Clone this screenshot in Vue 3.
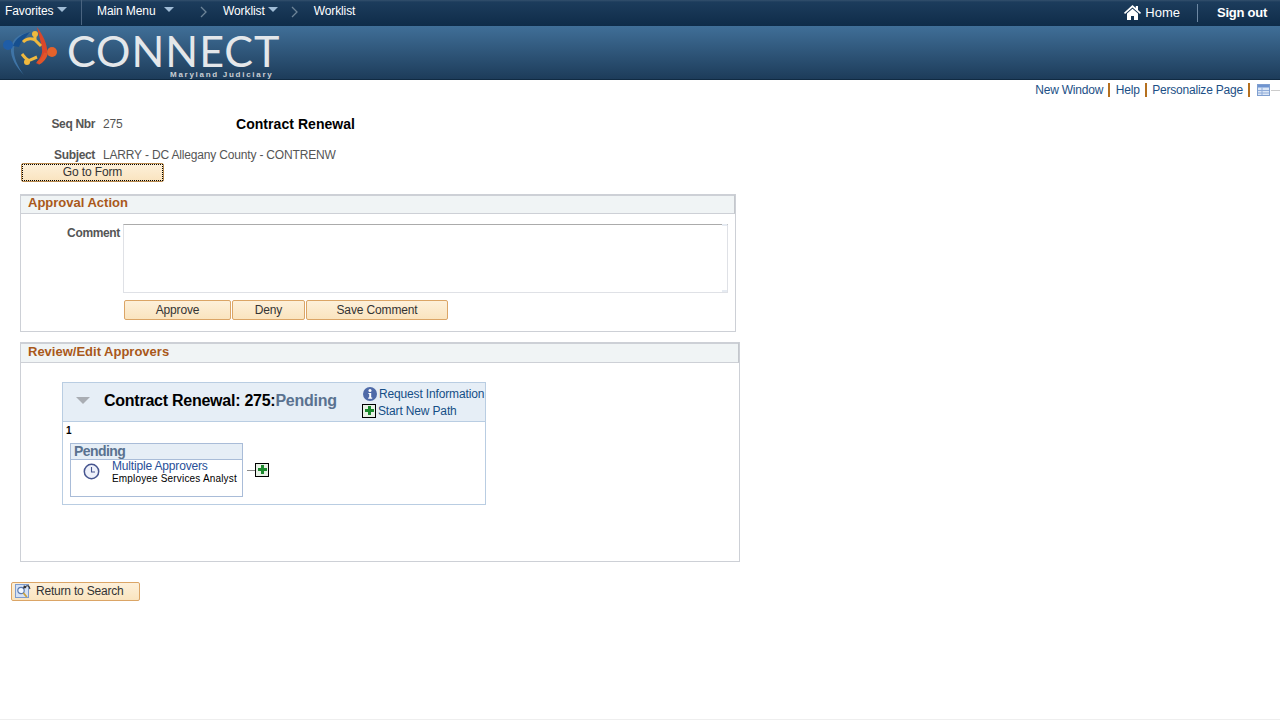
<script setup>
const links = ['New Window', 'Help', 'Personalize Page']
const actions = [
  { label: 'Approve', cls: 'approve' },
  { label: 'Deny', cls: 'deny' },
  { label: 'Save Comment', cls: 'save' }
]
</script>

<template>
  <div class="page">
    <nav class="nav">
      <div class="nav-left">
        <span class="fav">Favorites<i class="caret"></i></span>
        <span class="main">Main Menu<i class="caret wide"></i></span>
        <svg class="chev first" width="8" height="12" viewBox="0 0 8 12"><path d="M1 1l5 5-5 5" fill="none" stroke="#6d8498" stroke-width="1.3"/></svg>
        <span class="crumb">Worklist<i class="caret near"></i></span>
        <svg class="chev second" width="8" height="12" viewBox="0 0 8 12"><path d="M1 1l5 5-5 5" fill="none" stroke="#6d8498" stroke-width="1.3"/></svg>
        <span class="crumb last">Worklist</span>
      </div>
      <div class="nav-right">
        <svg class="home" width="17" height="15" viewBox="0 0 17 15"><path d="M8.5 0L0 7.8l1 1.1L8.5 2.4 16 8.9l1-1.1-3-2.7V1h-2.2v2.1z" fill="#fff"/><path d="M8.5 3.8L3 8.6V15h4v-4h3v4h4V8.6z" fill="#fff"/></svg>
        <span class="home-text">Home</span>
        <span class="sign">Sign out</span>
      </div>
    </nav>
    <header class="band">
      <svg class="logo" width="60" height="50" viewBox="0 0 60 50">
        <path d="M31 7C22 9 15 15 14 22c-1 9 4 19 10 27-7-7-14-17-13-27C12 13 20 6 31 7z" fill="#3f74a6"/>
        <path d="M30 6c-6 7-10 11-11 15l-6-1c2-7 9-12 17-14z" fill="#164f8f"/>
        <path d="M37 1c5 7 11 17 10 26-1 6-4 9-9 11l-2-1c3-3 7-9 6-14-1-8-4-16-5-22z" fill="#d9472b"/>
        <path d="M46 27c-1 4-4 8-8 10" fill="none" stroke="#e0552a" stroke-width="4"/>
        <circle cx="8" cy="19" r="5" fill="#1f5da8"/>
        <circle cx="52" cy="26" r="5" fill="#e4622b"/>
        <circle cx="35" cy="8" r="3" fill="#f0b93e"/>
        <circle cx="27" cy="36" r="3" fill="#f0b93e"/>
        <path d="M23 16c4-4 8-4 12-2l6 6M35 8v6" fill="none" stroke="#f0b93e" stroke-width="3"/>
        <path d="M22 28c3 4 6 7 8 6l7-3M27 36l2-3" fill="none" stroke="#f0b93e" stroke-width="3"/>
      </svg>
      <div class="brand">
        <span class="connect">CONNECT</span>
        <span class="md">Maryland Judiciary</span>
      </div>
    </header>

    <div class="pagelinks">
      <template v-for="l in links" :key="l">
        <a class="plink">{{ l }}</a><span class="sep"></span>
      </template>
      <svg class="grid-ico" width="13" height="12" viewBox="0 0 13 12">
        <rect x=".5" y=".5" width="12" height="11" fill="#dce7f6" stroke="#7f9fd0"/>
        <path d="M1 1h11v2.5H1z" fill="#6f94d0"/>
        <path d="M1 6.5h11M1 9h11M5 3.5V11" stroke="#8fabd8" fill="none"/>
      </svg>
      <span class="dash"></span>
    </div>

    <main class="content">
      <div class="seq-row">
        <span class="lbl lbl-seq">Seq Nbr</span>
        <span class="val">275</span>
        <span class="title">Contract Renewal</span>
      </div>
      <div class="subj-row">
        <span class="lbl lbl-subj">Subject</span>
        <span class="val">LARRY - DC Allegany County - CONTRENW</span>
      </div>
      <button class="btn goto"><span class="dots">Go to Form</span></button>

      <section class="group approval">
        <h2 class="ghead">Approval Action</h2>
        <div class="comment-row">
          <label class="lbl lbl-comment">Comment</label>
          <div class="comment-wrap"><textarea class="comment"></textarea></div>
        </div>
        <div class="actions">
          <button v-for="a in actions" :key="a.label" class="btn" :class="a.cls">{{ a.label }}</button>
        </div>
      </section>

      <section class="group review">
        <h2 class="ghead">Review/Edit Approvers</h2>
        <div class="flow">
          <div class="flow-head">
            <i class="flow-caret"></i>
            <span class="flow-title">Contract Renewal: 275:<span class="pending">Pending</span></span>
            <div class="flow-links">
              <a class="flink">
                <svg width="14" height="14" viewBox="0 0 14 14"><circle cx="7" cy="7" r="7" fill="#4f6aa8"/><circle cx="7" cy="3.5" r="1.5" fill="#fff"/><path d="M5.4 6h2.8v4.6h1v1.1H5.2v-1.1h1V7.1h-.8z" fill="#fff"/></svg>
                Request Information
              </a>
              <a class="flink add-link"><span class="plus-box"><svg width="9" height="9" viewBox="0 0 9 9"><path d="M3 0h3v3h3v3H6v3H3V6H0V3h3z" fill="#1d8a2e"/></svg></span>Start New Path</a>
            </div>
          </div>
          <div class="flow-body">
            <div class="step-no">1</div>
            <div class="step-row">
              <div class="step">
                <div class="step-head">Pending</div>
                <div class="step-body">
                  <svg class="clock" width="17" height="17" viewBox="0 0 17 17"><circle cx="8.5" cy="8.5" r="7.2" fill="#eef1fa" stroke="#46558f" stroke-width="1.5"/><path d="M8.5 4v5h3.5" fill="none" stroke="#46558f" stroke-width="1.1"/></svg>
                  <div class="step-text">
                    <a class="person">Multiple Approvers</a>
                    <span class="role">Employee Services Analyst</span>
                  </div>
                </div>
              </div>
              <span class="connector"></span>
              <span class="plus-box"><svg width="9" height="9" viewBox="0 0 9 9"><path d="M3 0h3v3h3v3H6v3H3V6H0V3h3z" fill="#1d8a2e"/></svg></span>
            </div>
          </div>
        </div>
      </section>

      <button class="btn back">
        <svg width="17" height="15" viewBox="0 0 17 15">
          <rect x=".5" y="1.5" width="13" height="13" fill="#d5e1f4" stroke="#7d9ccf"/>
          <circle cx="6" cy="7.5" r="3.2" fill="#f4f8fd" stroke="#5d7bb0" stroke-width="1.2"/>
          <path d="M8.4 10l3.4 4" stroke="#c9a13d" stroke-width="1.8"/>
          <path d="M9.5 5c.5-2 3-3 4.500-1.500L15 6" fill="none" stroke="#333" stroke-width="1.1"/>
          <path d="M9 2l-1 3.500 3.500-.5z" fill="#333"/>
        </svg>
        Return to Search
      </button>
    </main>
  </div>
</template>

<style>
html, body { margin: 0; background: #fff; }
</style>

<style scoped>
.page {
  height: 719px;
  border-bottom: 1px solid #eee;
  font-family: "Liberation Sans", Arial, sans-serif;
  font-size: 12px;
  color: #333;
  overflow: hidden;
}
.nav {
  height: 26px;
  box-sizing: border-box;
  display: flex;
  justify-content: space-between;
  background: linear-gradient(#33506d 0, #1c3c5c 2px, #0f2c49 100%);
  color: #fff;
}
.nav-left { display: flex; align-items: flex-start; }
.nav-left span { line-height: 22px; white-space: nowrap; letter-spacing: -.1px; }
.fav { width: 82px; padding-left: 5px; box-sizing: border-box; border-right: 1px solid #4a6480; height: 25px; }
.main { padding-left: 15px; width: 103px; box-sizing: border-box; }
.caret {
  display: inline-block;
  vertical-align: 3px;
  margin-left: 4px;
  border-left: 5px solid transparent;
  border-right: 5px solid transparent;
  border-top: 5px solid #a0bcd6;
}
.caret.wide { margin-left: 9px; }
.caret.near { margin-left: 3px; }
.chev { margin-top: 6px; }
.chev.first { margin-left: 15px; }
.chev.second { margin-left: 13px; }
.crumb { margin-left: 15px; }
.crumb.last { margin-left: 15px; }
.nav-right { display: flex; align-items: center; padding-right: 13px; padding-bottom: 1px; }
.home { margin-right: 4px; }
.home-text { font-size: 13px; padding-right: 17px; border-right: 1px solid #6d88a3; height: 18px; line-height: 18px; }
.sign { font-size: 13px; font-weight: 700; margin-left: 19px; letter-spacing: -.25px; }
.band {
  height: 53px;
  display: flex;
  background: linear-gradient(#406f98, #1d3c5a);
  border-bottom: 1px solid #102a42;
}
.logo { margin: 0 7px 0 0; }
.brand { position: relative; width: 215px; }
.connect {
  display: block;
  margin-top: 6px;
  font-family: Lato, sans-serif;
  font-size: 43px;
  line-height: 38px;
  color: #e4e7ea;
  letter-spacing: 1px;
  white-space: nowrap;
}
.md {
  position: absolute;
  left: 103px;
  top: 44px;
  font-size: 8px;
  line-height: 9px;
  font-weight: 700;
  letter-spacing: 1.72px;
  color: #c9ced3;
  white-space: nowrap;
}
.pagelinks {
  height: 18px;
  display: flex;
  justify-content: flex-end;
  align-items: center;
  padding-top: 1px;
  color: #1c4f86;
}
.plink { line-height: 18px; letter-spacing: -.2px; }
.sep { width: 2px; height: 14px; background: #b5701f; margin: 0 5.5px 0 5px; }
.grid-ico { margin-left: 1.5px; }
.dash { width: 9px; height: 1px; background: #ccc; margin-left: 1px; }
.content { padding-left: 20px; }
.lbl { font-weight: 700; color: #555; text-align: right; letter-spacing: -.35px; }
.val { color: #555; letter-spacing: -.17px; }
.seq-row { display: flex; align-items: flex-start; padding-top: 18px; height: 24px; line-height: 14px; }
.lbl-seq { width: 75px; }
.seq-row .val { margin-left: 8px; width: 133px; }
.title { font-size: 14px; font-weight: 700; color: #000; letter-spacing: .05px; }
.subj-row { display: flex; align-items: baseline; padding-top: 7px; height: 14px; line-height: 14px; }
.lbl-subj { width: 75px; }
.subj-row .val { margin-left: 8px; }
.btn {
  display: block;
  box-sizing: border-box;
  height: 20px;
  padding: 0;
  font-family: inherit;
  font-size: 12px;
  letter-spacing: -.14px;
  color: #333;
  border: 1px solid #dba566;
  border-radius: 2px;
  background: linear-gradient(#fdf0da, #fae4bf);
  text-align: center;
}
.goto { width: 143px; height: 19px; margin: 1px 0 0 1px; padding: 0; border-color: #b88a4e; }
.dots { display: block; height: 17px; line-height: 15px; border: 1px dotted #000; box-sizing: border-box; }
.group { box-sizing: border-box; border: 1px solid #cdd0d6; border-top: 0; }
.ghead {
  margin: 0;
  box-sizing: border-box;
  height: 20px;
  padding-left: 7px;
  font-size: 13px;
  line-height: 13px;
  font-weight: 700;
  color: #a9581a;
  background: #f0f4f5;
  border-top: 2px solid #cdd0d6;
  border-bottom: 1px solid #cdd0d6;
  border-right: 1px solid #c4c7cc;
}
.approval { width: 716px; height: 138px; margin-top: 12px; }
.comment-row { display: flex; padding-top: 10px; }
.lbl-comment { width: 99px; padding-top: 3px; line-height: 13px; }
.comment-wrap { position: relative; width: 605px; height: 69px; margin-left: 3px; }
.comment-wrap::before,
.comment-wrap::after {
  content: "";
  position: absolute;
  right: 1px;
  width: 5px;
  height: 2px;
  background: #e6ebf2;
}
.comment-wrap::before { top: 0; }
.comment-wrap::after { bottom: 1px; }
.comment {
  display: block;
  box-sizing: border-box;
  width: 605px;
  height: 69px;
  margin: 0;
  padding: 0;
  border: 1px solid #dfe1e6;
  border-top-color: #ababab;
  background: #fff;
  resize: none;
}
.actions { display: flex; gap: 1px; padding: 7px 0 0 103px; }
.approve { width: 107px; }
.deny { width: 73px; }
.save { width: 142px; }
.review { width: 720px; height: 220px; margin-top: 10px; }
.review .ghead { height: 21px; padding-top: 1px; line-height: 13px; }
.flow { box-sizing: border-box; width: 424px; height: 123px; margin: 19px 0 0 41px; border: 1px solid #b9cde2; }
.flow-head { box-sizing: border-box; height: 39px; display: flex; background: #e6eef6; border-bottom: 1px solid #b9cde2; }
.flow-caret {
  margin: 14px 0 0 13px;
  width: 0; height: 0;
  border-left: 7px solid transparent;
  border-right: 7px solid transparent;
  border-top: 7px solid #a9adb3;
}
.flow-title { margin: 8px 0 0 14px; font-size: 16px; line-height: 20px; font-weight: 700; color: #000; white-space: nowrap; width: 259px; letter-spacing: -.25px; }
.pending { color: #5a7290; }
.flow-links { display: flex; flex-direction: column; color: #164f86; letter-spacing: -.15px; }
.flink { display: flex; align-items: center; gap: 2px; height: 17px; white-space: nowrap; margin-top: 2px; }
.add-link { margin-top: 0; gap: 2px; margin-left: -1px; }
.plus-box {
  box-sizing: border-box;
  width: 14px; height: 14px;
  display: inline-flex;
  align-items: center;
  justify-content: center;
  border: 1px solid #000;
  background: #e8f1e6;
}
.flow-body { padding: 3px 0 0 3px; }
.step-no { font-size: 10px; font-weight: 700; color: #000; line-height: 12px; }
.step-row { display: flex; align-items: center; margin: 6px 0 0 4px; }
.step { box-sizing: border-box; width: 173px; height: 54px; border: 1px solid #a9bcd8; }
.step-head { box-sizing: border-box; height: 16px; padding-left: 3px; background: #e6eef6; border-bottom: 1px solid #a9bcd8; font-size: 14px; line-height: 15px; font-weight: 700; color: #5a7290; letter-spacing: -.55px; }
.step-body { display: flex; }
.clock { margin: 3px 0 0 12px; }
.step-text { display: flex; flex-direction: column; margin-left: 12px; white-space: nowrap; }
.person { color: #284f98; line-height: 12px; margin-top: 0; letter-spacing: -.17px; }
.role { font-size: 10px; color: #000; line-height: 14px; letter-spacing: .17px; }
.connector { width: 8px; height: 1px; background: #888; margin: 0 0 0 4px; }
.step-row .plus-box { margin-top: -1px; }
.back {
  display: flex;
  align-items: center;
  justify-content: flex-start;
  gap: 4px;
  width: 129px;
  height: 19px;
  margin: 20px 0 0 -9px;
  padding: 0 0 2px 3px;
  letter-spacing: -.2px;
  border-radius: 2px;
}
</style>
